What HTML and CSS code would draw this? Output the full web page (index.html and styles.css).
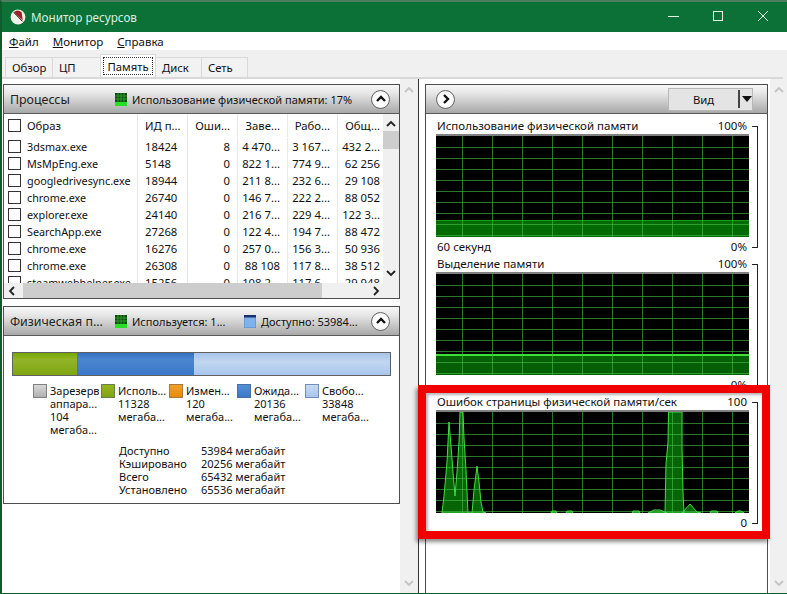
FILE: index.html
```html
<!DOCTYPE html>
<html lang="ru">
<head>
<meta charset="utf-8">
<title>Монитор ресурсов</title>
<link rel="stylesheet" href="styles.css">
</head>
<body>
<svg class="defs" width="0" height="0" aria-hidden="true">
  <defs>
    <path id="spikes" d="M6 101L8 84L11 50L13 10L15 34L17 60L19 84L21 60L23 30L24 0L27 0L28 26L30 58L31 80L32 101L36 101L38 78L41 54L43 70L45 90L47 100L50 101ZM115 101L116 99H120L121 101ZM130 101L131 99H136L137 101ZM196 101L197 99H203L204 101ZM212 101L218 98L224 98L231 101ZM229 101L230 52L232 30L232.500 0H246L246 35L247 80L248 101ZM246 101L254 92L261 100L265 101ZM274 101L275 99H281L282 101ZM299 101L302 99L305 99L308 101Z"/>
    <clipPath id="spike-clip"><use href="#spikes"/></clipPath>
    <symbol id="mem-icon" viewBox="0 0 12 13">
      <rect width="12" height="13" fill="#0b4d0b"/>
      <path d="M3 0V9M6 0V9M9 0V9M0 3H12M0 6H12" stroke="#2f9a2f" stroke-width="1"/>
      <rect y="9" width="12" height="4" fill="#25e025"/>
    </symbol>
    <symbol id="free-icon" viewBox="0 0 12 13">
      <rect width="12" height="13" fill="#7fb2ea" stroke="#5a86bd"/>
      <rect width="12" height="2.500" fill="#17306e"/>
    </symbol>
  </defs>
</svg>
<div class="window">
  <header class="titlebar">
    <svg class="app-icon" viewBox="0 0 16 16" aria-hidden="true">
      <circle cx="8" cy="8" r="7.400" fill="#f4efe9"/>
      <path d="M3.800 3.200A6 6 0 0 1 11.600 3.200L12.800 11.500Z" fill="#9c2226"/>
      <path d="M3.800 3.400L12.400 12.400" stroke="#3a1a1a" stroke-width="1"/>
    </svg>
    <span class="title">Монитор ресурсов</span>
    <div class="controls">
      <svg class="ctl" viewBox="0 0 12 12" aria-hidden="true"><path d="M1 6.500H12" /></svg>
      <svg class="ctl" viewBox="0 0 12 12" aria-hidden="true"><rect x="1.500" y="1.500" width="9" height="9"/></svg>
      <svg class="ctl" viewBox="0 0 12 12" aria-hidden="true"><path d="M1 1L11 11M11 1L1 11"/></svg>
    </div>
  </header>

  <nav class="menu">
    <span><u>Ф</u>айл</span>
    <span><u>М</u>онитор</span>
    <span><u>С</u>правка</span>
  </nav>

  <div class="tabs">
    <span class="tab tab-w1">Обзор</span>
    <span class="tab tab-w2">ЦП</span>
    <span class="tab tab-active"><span class="focus">Память</span></span>
    <span class="tab tab-w3">Диск</span>
    <span class="tab tab-w3">Сеть</span>
  </div>

  <main class="panes">
    <div class="left">
      <section class="panel panel-proc">
        <div class="phead">
          <span class="ptitle">Процессы</span>
          <svg class="sicon"><use href="#mem-icon"/></svg>
          <span class="pinfo pinfo-main">Использование физической памяти: 17%</span>
          <span class="round"><svg viewBox="0 0 12 12" aria-hidden="true"><path d="M2 8L6 4L10 8"/></svg></span>
        </div>
        <div class="tablewrap">
          <div class="table">
            <div class="row head">
              <span class="c-name"><i class="check"></i><b class="hname">Образ</b></span>
              <span class="c-id">ИД п...</span>
              <span class="c-num">Оши...</span>
              <span class="c-num">Заве...</span>
              <span class="c-num">Рабо...</span>
              <span class="c-num">Общ...</span>
            </div>
            <div class="row"><span class="c-name"><i class="check"></i>3dsmax.exe</span><span class="c-id">18424</span><span class="c-num">8</span><span class="c-num">4 470...</span><span class="c-num">3 167...</span><span class="c-num">432 2...</span></div>
            <div class="row"><span class="c-name"><i class="check"></i>MsMpEng.exe</span><span class="c-id">5148</span><span class="c-num">0</span><span class="c-num">822 1...</span><span class="c-num">774 9...</span><span class="c-num">62 256</span></div>
            <div class="row"><span class="c-name"><i class="check"></i>googledrivesync.exe</span><span class="c-id">18944</span><span class="c-num">0</span><span class="c-num">211 8...</span><span class="c-num">232 6...</span><span class="c-num">29 108</span></div>
            <div class="row"><span class="c-name"><i class="check"></i>chrome.exe</span><span class="c-id">26740</span><span class="c-num">0</span><span class="c-num">146 7...</span><span class="c-num">222 2...</span><span class="c-num">88 052</span></div>
            <div class="row"><span class="c-name"><i class="check"></i>explorer.exe</span><span class="c-id">24140</span><span class="c-num">0</span><span class="c-num">216 7...</span><span class="c-num">229 4...</span><span class="c-num">122 3...</span></div>
            <div class="row"><span class="c-name"><i class="check"></i>SearchApp.exe</span><span class="c-id">27268</span><span class="c-num">0</span><span class="c-num">122 4...</span><span class="c-num">194 7...</span><span class="c-num">88 472</span></div>
            <div class="row"><span class="c-name"><i class="check"></i>chrome.exe</span><span class="c-id">16276</span><span class="c-num">0</span><span class="c-num">257 0...</span><span class="c-num">156 3...</span><span class="c-num">50 936</span></div>
            <div class="row"><span class="c-name"><i class="check"></i>chrome.exe</span><span class="c-id">26308</span><span class="c-num">0</span><span class="c-num">88 108</span><span class="c-num">117 8...</span><span class="c-num">38 512</span></div>
            <div class="row"><span class="c-name"><i class="check"></i>steamwebhelper.exe</span><span class="c-id">15256</span><span class="c-num">0</span><span class="c-num">108 2...</span><span class="c-num">117 6...</span><span class="c-num">29 948</span></div>
          </div>
          <div class="vscroll">
            <svg class="arrow" viewBox="0 0 12 12" aria-hidden="true"><path d="M2 8L6 4L10 8"/></svg>
            <div class="vthumb"></div>
            <svg class="arrow arrow-bottom" viewBox="0 0 12 12" aria-hidden="true"><path d="M2 4L6 8L10 4"/></svg>
          </div>
        </div>
        <div class="hscroll">
          <svg class="arrow" viewBox="0 0 12 12" aria-hidden="true"><path d="M8 2L4 6L8 10"/></svg>
          <div class="hthumb"></div>
          <svg class="arrow arrow-right" viewBox="0 0 12 12" aria-hidden="true"><path d="M4 2L8 6L4 10"/></svg>
        </div>
      </section>

      <section class="panel panel-mem">
        <div class="phead">
          <span class="ptitle">Физическая п...</span>
          <svg class="sicon"><use href="#mem-icon"/></svg>
          <span class="pinfo pinfo-used">Используется: 1...</span>
          <svg class="sicon"><use href="#free-icon"/></svg>
          <span class="pinfo pinfo-main">Доступно: 53984...</span>
          <span class="round"><svg viewBox="0 0 12 12" aria-hidden="true"><path d="M2 8L6 4L10 8"/></svg></span>
        </div>
        <div class="membody">
          <div class="membar">
            <div class="seg seg-used"></div>
            <div class="seg seg-standby"></div>
            <div class="seg seg-free"></div>
          </div>
          <div class="legend">
            <div class="lg"><i class="sw sw-res"></i><p>Зарезерв<br>аппара...<br>104<br>мегаба...</p></div>
            <div class="lg"><i class="sw sw-used"></i><p>Исполь...<br>11328<br>мегаба...</p></div>
            <div class="lg"><i class="sw sw-mod"></i><p>Измен...<br>120<br>мегаба...</p></div>
            <div class="lg"><i class="sw sw-standby"></i><p>Ожида...<br>20136<br>мегаба...</p></div>
            <div class="lg"><i class="sw sw-free"></i><p>Свобо...<br>33848<br>мегаба...</p></div>
          </div>
          <dl class="stats">
            <dt>Доступно</dt><dd>53984 мегабайт</dd>
            <dt>Кэшировано</dt><dd>20256 мегабайт</dd>
            <dt>Всего</dt><dd>65432 мегабайт</dd>
            <dt>Установлено</dt><dd>65536 мегабайт</dd>
          </dl>
        </div>
      </section>
    </div>

    <div class="midscroll">
      <svg class="arrow faint" viewBox="0 0 12 12" aria-hidden="true"><path d="M2 8L6 4L10 8"/></svg>
      <svg class="arrow faint arrow-bottom" viewBox="0 0 12 12" aria-hidden="true"><path d="M2 4L6 8L10 4"/></svg>
    </div>

    <section class="charts">
      <div class="chartpanel">
        <div class="phead phead-right">
          <span class="round"><svg viewBox="0 0 12 12" aria-hidden="true"><path d="M4 2L8 6L4 10"/></svg></span>
          <div class="viewbtn"><span class="viewlabel">Вид</span><i class="viewsep"></i><i class="viewtri"></i></div>
        </div>
        <div class="chart">
          <div class="chart-top"><span>Использование физической памяти</span><span>100%</span></div>
          <div class="plot">
            <div class="fill fill-used"></div>
            <div class="grid"></div>
          </div>
          <div class="chart-bottom"><span>60 секунд</span><span>0%</span></div>
        </div>
        <div class="chart">
          <div class="chart-top"><span>Выделение памяти</span><span>100%</span></div>
          <div class="plot">
            <div class="fill fill-alloc"></div>
            <div class="grid"></div>
          </div>
          <div class="chart-bottom"><span></span><span>0%</span></div>
        </div>
        <div class="chart">
          <div class="chart-top"><span>Ошибок страницы физической памяти/сек</span><span>100</span></div>
          <div class="plot">
            <svg class="spikes" viewBox="0 0 313 101" aria-hidden="true"><use href="#spikes" class="spike-fill"/></svg>
            <div class="grid"></div>
            <svg class="spikes" viewBox="0 0 313 101" aria-hidden="true"><use href="#spikes" class="spike-line"/></svg>
          </div>
          <div class="chart-bottom"><span></span><span>0</span></div>
        </div>
      </div>
    </section>

    <div class="rightscroll">
      <svg class="arrow faint" viewBox="0 0 12 12" aria-hidden="true"><path d="M2 8L6 4L10 8"/></svg>
      <svg class="arrow faint arrow-bottom" viewBox="0 0 12 12" aria-hidden="true"><path d="M2 4L6 8L10 4"/></svg>
    </div>
  </main>
  <div class="highlight"></div>
</div>
</body>
</html>
```
FILE: styles.css
```css
* { box-sizing: border-box; }
html, body { margin: 0; padding: 0; }
body {
  width: 787px; height: 594px; overflow: hidden;
  font: 11.300px/13px "Noto Sans", "Liberation Sans", sans-serif;
  color: #111;
  background: #fff;
}
.defs { position: absolute; }
.window {
  position: relative;
  width: 787px; height: 594px;
  display: flex; flex-direction: column;
  background: #f0f0f0;
  border-left: 2px solid #0d5c2c;
  border-bottom: 1px solid #0d5c2c;
  border-top: 2px solid #4d7d5d;
  overflow: hidden;
}
.titlebar {
  height: 30px; flex: none;
  display: flex; align-items: center;
  background: #0c7136;
  color: #dcefe0;
  padding-left: 8px;
}
.app-icon { width: 16px; height: 16px; margin-right: 5px; }
.title { font-size: 11.700px; flex: 1; padding-top: 1px; }
.controls { display: flex; padding-right: 18px; gap: 33px; margin-top: -2px; }
.ctl { width: 12px; height: 12px; fill: none; stroke: #e4f2e8; stroke-width: 1; }
.menu {
  height: 18px; flex: none;
  display: flex; gap: 14px;
  align-items: center;
  background: #fff;
  padding-left: 7px;
  font-size: 11.500px;
}
.tabs {
  height: 27px; flex: none;
  display: flex; align-items: flex-end;
  background: #f0f0f0;
  padding: 0 0 0 3px;
}
.tab {
  height: 20px;
  display: flex; align-items: center;
  background: #f2f2f2;
  border: 1px solid #d9d9d9;
  border-bottom: 0;
  margin-left: -1px;
  padding-left: 6px;
}
.tab-w1 { width: 48px; margin-left: 0; }
.tab-w2 { width: 49px; }
.tab-w3 { width: 47px; }
.tab-active {
  width: 56px; height: 23px;
  background: #fff;
  position: relative;
  z-index: 1;
  padding: 2px;
}
.focus {
  display: flex; align-items: center; justify-content: center;
  width: 100%; height: 100%;
  border: 1px dotted #333;
}
.panes {
  flex: 1; min-height: 0;
  display: flex;
  background: #fff;
  border-top: 2px solid #d8d8d8;
  margin-right: 4px;
  padding-top: 5px;
}
.left {
  width: 397px; flex: none;
  margin-left: 1px;
  display: flex; flex-direction: column; gap: 7px;
}
.panel { border: 1px solid #4d4d4d; background: #fff; }
.phead {
  height: 29px;
  display: flex; align-items: center;
  background: linear-gradient(#f8f8f8, #e6e6e6 30%, #a8a8a8);
  border-bottom: 1px solid #5a5a5a;
}
.ptitle { font-size: 12.400px; color: #222; width: 111px; padding-left: 6px; white-space: nowrap; }
.sicon { width: 12px; height: 13px; flex: none; }
.pinfo { margin-left: 5px; white-space: nowrap; font-size: 11px; }
.pinfo-used { width: 112px; }
.pinfo-main { flex: 1; }
.round {
  width: 19px; height: 19px; flex: none;
  border: 1px solid #666;
  border-radius: 50%;
  background: radial-gradient(#fff 45%, #e0e0e0);
  display: flex; align-items: center; justify-content: center;
  margin-right: 9px;
}
.round svg { width: 12px; height: 12px; fill: none; stroke: #111; stroke-width: 2.400; }
.tablewrap { height: 169px; display: flex; overflow: hidden; }
.table { width: 379px; flex: none; }
.row {
  display: grid;
  grid-template-columns: 134px 50px 50px 50px 50px 45px;
  height: 17.100px;
  align-items: stretch;
  white-space: nowrap;
}
.row.head { height: 23px; margin-bottom: .5px; }
.row > span {
  display: flex; align-items: center;
  border-right: 1px solid #e8e8e8;
  overflow: hidden;
}
.row > span:last-child { border-right: 0; padding-right: 3px; }
.c-name { padding-left: 4px; font-size: 10.800px; }
.c-id { padding-left: 7px; }
.c-num { justify-content: flex-end; padding-right: 7px; }
.check {
  width: 13px; height: 13px; flex: none;
  border: 1px solid #333;
  background: #fff;
  margin-right: 6px;
}
.hname { font-weight: 400; font-size: 11.300px; }
.vscroll, .midscroll, .rightscroll {
  position: relative;
  background: #f0f0f0;
}
.vscroll { width: 16px; flex: none; padding-top: 4px; }
.arrow { display: block; width: 12px; height: 12px; margin: 0 auto; fill: none; stroke: #222; stroke-width: 1.800; }
.faint { stroke: #c4c4c4; }
.arrow-bottom { position: absolute; left: 0; right: 0; bottom: 4px; }
.vthumb { height: 18px; background: #cdcdcd; margin-top: 1px; }
.hscroll {
  height: 15px;
  display: flex; align-items: center;
  background: #f0f0f0;
}
.hscroll .arrow { margin: 0 2px; flex: none; }
.hthumb { width: 299px; height: 100%; background: #cdcdcd; margin-left: 3px; }
.hscroll .arrow-right { margin-left: auto; margin-right: 17px; }
.membody { height: 167px; padding: 16px 8px 0; }
.membar {
  height: 24px;
  display: flex;
  border: 1px solid #606060;
}
.seg-used { width: 65px; background: linear-gradient(#74a800, #93b42a 30%, #7ea512); border-right: 1px solid #5f7d5a; }
.seg-standby { width: 116px; background: linear-gradient(#3470c0, #4a86d0 30%, #3b78c8); }
.seg-free { flex: 1; background: linear-gradient(#a6c4e8, #c2d6f0 40%, #a8c6ec); }
.legend {
  display: flex;
  padding-left: 21px;
  margin-top: 8px;
}
.lg { width: 68px; display: flex; gap: 3px; }
.lg p { margin: 0; white-space: nowrap; overflow: hidden; width: 49px; font-size: 11px; }
.sw { width: 14px; height: 14px; flex: none; border: 1px solid #555; }
.sw-res { background: linear-gradient(#d8d8d8, #b0b0b0); border-color: #808080; }
.sw-used { background: linear-gradient(#95b520, #7ea512); border-color: #6a7f4a; }
.sw-mod { background: linear-gradient(#f0a030, #e88a08); border-color: #a87a3a; }
.sw-standby { background: linear-gradient(#5590d8, #3b78c8); border-color: #4a6f9e; }
.sw-free { background: linear-gradient(#c8daf2, #a8c6ec); border-color: #6f8fb8; }
.stats {
  display: grid;
  grid-template-columns: 82px auto;
  margin: 8px 0 0 107px;
  justify-content: start;
  font-size: 11px;
}
.stats dt, .stats dd { margin: 0; }
.midscroll { width: 19px; flex: none; margin-top: -5px; padding-top: 5px; border-right: 1px solid #333; }
.charts { width: 343px; flex: none; margin-left: 6px; }
.chartpanel {
  height: 100%;
  border: 1px solid #4d4d4d;
  border-bottom: 0;
}
.phead-right { padding-left: 10px; }
.phead-right .round { margin-right: 0; }
.viewbtn {
  margin-left: auto; margin-right: 14px;
  width: 85px; height: 23px;
  background: #e4e4e4;
  border: 1px solid #b8b8b8;
  display: flex; align-items: center;
}
.viewlabel { width: 71px; text-align: center; }
.viewsep { width: 2px; height: 18px; background: #444; }
.viewtri {
  width: 0; height: 0; margin-left: 2px;
  border-left: 5px solid transparent;
  border-right: 5px solid transparent;
  border-top: 6px solid #111;
}
.chart { padding: 5px 0 0 10px; height: 138px; position: relative; width: 332px; }
.chart::after {
  content: "";
  position: absolute;
  right: 0; top: 12px; bottom: 4px;
  width: 5px;
  border: 1px solid #222;
  border-left: 0;
}
.chart-top, .chart-bottom {
  display: flex; justify-content: space-between;
  width: 313px;
  white-space: nowrap;
  padding: 0 2px 0 1px;
  font-size: 11.500px;
}
.chart-top { height: 15px; }
.chart-bottom { margin-top: 3px; height: 14px; }
.plot {
  position: relative;
  width: 313px; height: 101px;
  margin-top: 2px;
  background: #000;
  box-shadow: 0 -2px 0 #808080;
  overflow: hidden;
}
.plot > * { position: absolute; inset: 0; }
.grid {
  background-image:
    repeating-linear-gradient(to bottom, transparent 0 10px, rgba(70, 190, 70, .62) 10px 11px),
    repeating-linear-gradient(to right, transparent 0 29px, rgba(70, 190, 70, .62) 29px 30px);
  background-size: 100% 100%, 100% 100%;
  background-position: 0 1px, -3px 0;
}
.fill-used { top: 84px; background: #046b04; border-top: 1px solid #169b16; }
.fill-alloc { top: 80px; background: #055f05; border-top: 2px solid #38e038; }
.spikes { width: 313px; height: 101px; }
.spike-fill { fill: #076507; }
.spike-line { fill: none; stroke: #3fe03f; stroke-width: 1; }
.rightscroll { flex: 1; margin-left: 2px; margin-top: -5px; padding-top: 5px; min-width: 17px; margin-right: -4px; }
.highlight {
  position: absolute;
  left: 416px; top: 383px;
  width: 352px; height: 154px;
  border: 8px solid #f00000;
  box-shadow: -2px 3px 4px rgba(0,0,0,.45), inset 2px 2px 3px rgba(0,0,0,.3);
}
```
